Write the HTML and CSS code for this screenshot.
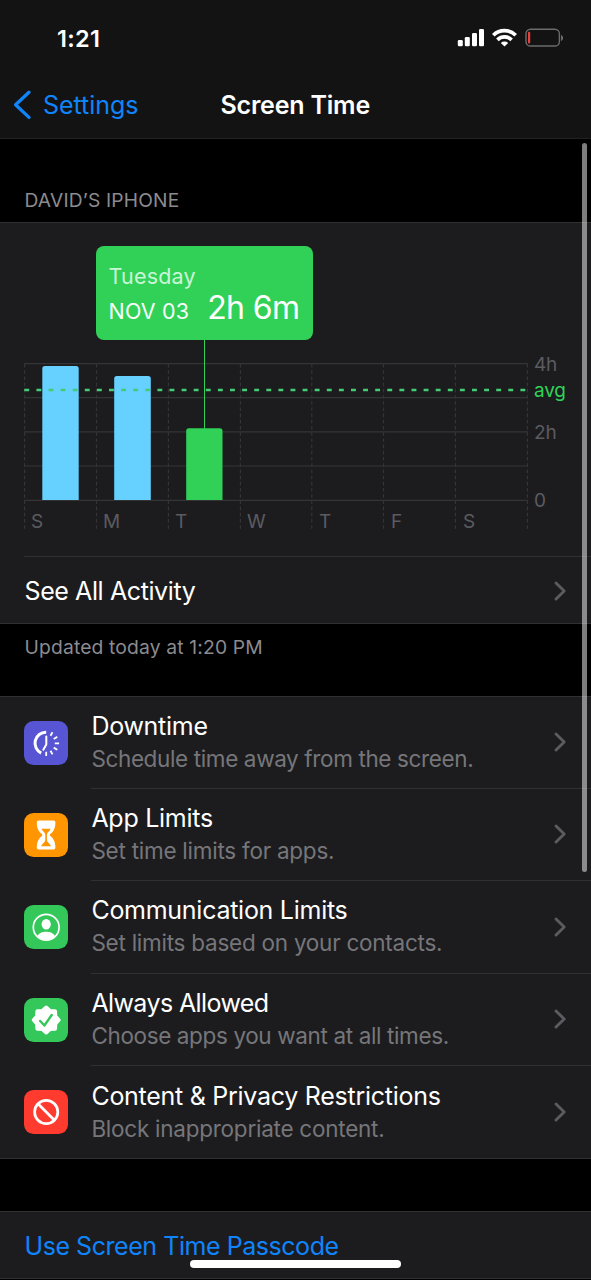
FILE: index.html
```html
<!DOCTYPE html>
<html lang="en">
<head>
<meta charset="utf-8">
<title>Screen Time</title>
<link rel="stylesheet" href="styles.css">
</head>
<body>
<div class="screen">
  <header class="top">
    <div class="status">
      <span class="clock">1:21</span>
      <svg class="status-icons" width="108" height="24" viewBox="0 0 108 24">
        <g fill="#fff">
          <rect x="0.8" y="14" width="5" height="6.3" rx="1.3"/>
          <rect x="7.8" y="11" width="5" height="9.3" rx="1.3"/>
          <rect x="15" y="7" width="5" height="13.3" rx="1.3"/>
          <rect x="22" y="3" width="5" height="17.3" rx="1.3"/>
        </g>
        <g fill="none" stroke="#fff" stroke-width="3.7">
          <path d="M36.3 9.2a16 16 0 0 1 22.4 0"/>
          <path d="M40.4 13.8a10.2 10.2 0 0 1 14.2 0"/>
        </g>
        <path fill="#fff" d="M43.8 17a5.4 5.4 0 0 1 7.4 0L47.5 20.6z"/>
        <rect x="69" y="3.2" width="33.4" height="16.8" rx="4.6" fill="none" stroke="#6c6c6c" stroke-width="1.4"/>
        <rect x="71" y="5.7" width="2.2" height="11.8" rx="1" fill="#e6413c"/>
        <path fill="#7c7c7c" d="M104.2 9v6c2.3-1 2.3-5 0-6z"/>
      </svg>
    </div>
    <nav class="nav">
      <svg width="20" height="32" viewBox="0 0 20 32" fill="none" stroke="#0f84fb" stroke-width="3.3" stroke-linecap="round" stroke-linejoin="round"><path d="M17 3.2 3.6 15.8l13.4 12.6"/></svg>
      <span class="back">Settings</span>
      <h1 class="title">Screen Time</h1>
    </nav>
  </header>

  <main>
    <div class="group-head"><span>DAVID’S IPHONE</span></div>
    <section class="card activity">
      <div class="chart">
        <div class="plot">
          <svg width="504" height="170" viewBox="24 362 504 170">
            <g stroke="#343436" stroke-width="1.2">
              <path d="M24 363.6H528M24 397.6H528M24 431.8H528M24 466H528M24 500.4H528"/>
              <path stroke-dasharray="3.6 2.6" d="M24.6 364V531M96.5 364V531M168.4 364V531M240.4 364V531M311.8 364V531M383.5 364V531M455.4 364V531M527.4 364V531"/>
            </g>
            <g fill="#66d1ff">
              <path d="M42.3 500V368.6a2.6 2.6 0 0 1 2.6-2.6H76.1a2.6 2.6 0 0 1 2.6 2.6V500z"/>
              <path d="M114.2 500V378.7a2.6 2.6 0 0 1 2.6-2.6H148.2a2.6 2.6 0 0 1 2.6 2.6V500z"/>
            </g>
            <path fill="#31d158" d="M186.2 500V430.9a2.6 2.6 0 0 1 2.6-2.6H219.9a2.6 2.6 0 0 1 2.6 2.6V500z"/>
            <path stroke="#43cc75" stroke-width="2.3" stroke-dasharray="4.9 7.2" d="M24.3 390H527"/>
          </svg>
          <div class="days"><span>S</span><span>M</span><span>T</span><span>W</span><span>T</span><span>F</span><span>S</span></div>
        </div>
        <div class="scale"><span>4h</span><span class="avg">avg</span><span class="two">2h</span><span class="zero">0</span></div>
        <div class="tip">
          <div class="tip-date"><span class="weekday">Tuesday</span><span class="date">NOV 03</span></div>
          <span class="amount">2h 6m</span>
        </div>
        <div class="stem"></div>
      </div>
      <div class="link-row">
        <span class="label see-all">See All Activity</span>
        <svg class="chev" viewBox="0 0 14 22"><path d="M3 3l8.2 8L3 19"/></svg>
      </div>
    </section>
    <p class="footnote"><span>Updated today at 1:20 PM</span></p>

    <section class="card list">
      <div class="item">
        <svg class="icon" viewBox="0 0 44 44"><rect width="44" height="44" rx="9.5" fill="#5755d4"/>
          <g fill="none" stroke="#fff">
            <path stroke-width="3" d="M22.2 11.2a11 11 0 0 0-5 20.9"/>
            <path stroke-width="2" stroke-linecap="round" stroke-linejoin="round" d="M22.3 15.5v8l-3 5.2"/>
            <path stroke-width="1.8" d="M26.5 14.8l2-3.6M29.7 18l3.6-2.1M30.8 22.3h4.3M29.7 26.6l3.6 2.1M26.5 29.8l2 3.6M22.2 30.8v4.3"/>
          </g></svg>
        <div class="body"><div class="text"><span class="label">Downtime</span><span class="sub">Schedule time away from the screen.</span></div><svg class="chev" viewBox="0 0 14 22"><path d="M3 3l8.2 8L3 19"/></svg></div>
      </div>
      <div class="item">
        <svg class="icon" viewBox="0 0 44 44"><rect width="44" height="44" rx="9.5" fill="#ff9500"/>
          <path fill="#fff" d="M14.8 7.5h14.6c1.2 0 2 .8 2 2 0 6.2-2.3 9.5-5.1 11.6q-1.2.9 0 1.8c2.8 2.1 5.1 5.4 5.1 11.6 0 1.2-.8 2-2 2H14.8c-1.2 0-2-.8-2-2 0-6.2 2.3-9.5 5.1-11.6q1.2-.9 0-1.8c-2.8-2.1-5.1-5.4-5.1-11.6 0-1.2.8-2 2-2z"/>
          <path fill="#ff9500" d="M17.5 15.7h9.2q-.9 2-2.7 3.5-1.1 1-1.1 2.8v4.6c0 3 2.3 3 4.2 6.6H17.1c1.9-3.6 4.2-3.6 4.2-6.6V22q0-1.8-1.1-2.8-1.8-1.5-2.7-3.5z"/></svg>
        <div class="body"><div class="text"><span class="label">App Limits</span><span class="sub sub-loose">Set time limits for apps.</span></div><svg class="chev" viewBox="0 0 14 22"><path d="M3 3l8.2 8L3 19"/></svg></div>
      </div>
      <div class="item">
        <svg class="icon" viewBox="0 0 44 44"><rect width="44" height="44" rx="9.5" fill="#34c759"/>
          <circle cx="22.2" cy="22.3" r="12.9" fill="none" stroke="#fff" stroke-width="1.7"/>
          <ellipse cx="22.2" cy="19.3" rx="4.6" ry="5.2" fill="#fff"/>
          <path fill="#fff" d="M13.3 31.2c1.5-3.3 5-4.5 8.9-4.5s7.4 1.2 8.9 4.5a12.8 12.8 0 0 1-17.8 0z"/></svg>
        <div class="body"><div class="text"><span class="label">Communication Limits</span><span class="sub sub-loose">Set limits based on your contacts.</span></div><svg class="chev" viewBox="0 0 14 22"><path d="M3 3l8.2 8L3 19"/></svg></div>
      </div>
      <div class="item">
        <svg class="icon" viewBox="0 0 44 44"><rect width="44" height="44" rx="9.5" fill="#34c759"/>
          <path fill="#fff" stroke="#fff" stroke-width="4" stroke-linejoin="round" d="M22.2 9.6L26 12.9L31 13.2L31.3 18.2L34.6 22L31.3 25.8L31 30.8L26 31.1L22.2 34.4L18.4 31.1L13.4 30.8L13.1 25.8L9.8 22L13.1 18.2L13.4 13.2L18.4 12.9z"/>
          <path fill="none" stroke="#34c759" stroke-width="2.4" stroke-linecap="round" stroke-linejoin="round" d="M16.2 23l4.2 4.5 7.3-10.5"/></svg>
        <div class="body"><div class="text"><span class="label tight">Always Allowed</span><span class="sub">Choose apps you want at all times.</span></div><svg class="chev" viewBox="0 0 14 22"><path d="M3 3l8.2 8L3 19"/></svg></div>
      </div>
      <div class="item">
        <svg class="icon" viewBox="0 0 44 44"><rect width="44" height="44" rx="9.5" fill="#ff3b30"/>
          <g fill="none" stroke="#fff" stroke-width="2.7"><circle cx="22.2" cy="22" r="11.6"/><path d="M14 13.8l16.4 16.4"/></g></svg>
        <div class="body"><div class="text"><span class="label">Content &amp; Privacy Restrictions</span><span class="sub sub-loose">Block inappropriate content.</span></div><svg class="chev" viewBox="0 0 14 22"><path d="M3 3l8.2 8L3 19"/></svg></div>
      </div>
    </section>

    <section class="card passcode"><span class="label blue">Use Screen Time Passcode</span></section>
  </main>
  <div class="scrollbar"></div>
  <div class="home"></div>
</div>
</body>
</html>
```
FILE: styles.css
```css
* { box-sizing: border-box; }
body {
  margin: 0;
  background: #000;
  color: #fff;
  font-family: Inter, "Liberation Sans", sans-serif;
}
.screen { position: relative; width: 591px; height: 1280px; overflow: hidden; background: #000; }
.top { height: 139px; background: #131313; border-bottom: 1px solid #222223; }
.status { height: 72px; display: flex; justify-content: space-between; align-items: center; padding: 4px 26px 0 57px; }
.clock { font-size: 23.5px; font-weight: 600; letter-spacing: 0.3px; }
.nav { height: 66px; display: grid; grid-template-columns: 20px 188.5px 1fr; align-items: center; padding: 0 0 1px 12px; }
.back { font-size: 25px; color: #0f84fb; letter-spacing: -0.05px; padding-left: 11px; }
.title { margin: 0; font-size: 25px; font-weight: 600; letter-spacing: -0.2px; white-space: nowrap; }

.group-head { height: 83px; display: flex; align-items: flex-end; padding: 0 24.5px 10px; font-size: 19.2px; line-height: 24px; letter-spacing: 0.18px; color: #8b8b90; }
.card { background: #1c1c1e; border-top: 1px solid #303032; border-bottom: 1px solid #303032; }
.activity { height: 402px; }
.chart { position: relative; height: 333px; padding: 139px 0 0 24px; display: flex; }
.plot { position: relative; width: 504px; height: 170px; }
.plot svg { display: block; }
.days { position: absolute; left: 0; bottom: -1px; width: 504px; display: grid; grid-template-columns: repeat(7, 72px); font-size: 19px; line-height: 22px; color: #5b5b60; }
.days span { padding-left: 7px; }
.scale { display: flex; flex-direction: column; padding-left: 6px; margin-top: -9px; font-size: 19px; line-height: 24px; color: #5b5b60; letter-spacing: -0.2px; }
.avg { color: #31d158; margin-top: 2px; }
.two { margin-top: 18px; }
.zero { margin-top: 44px; }
.tip { position: absolute; left: 96px; top: 23px; width: 216.5px; height: 94px; border-radius: 8px; background: #31d158; display: flex; align-items: flex-end; justify-content: space-between; padding: 0 13px 15px 12.5px; }
.tip-date { display: flex; flex-direction: column; font-size: 21.5px; line-height: 27px; letter-spacing: 0.2px; }
.weekday { color: #caf6d5; line-height: 43px; }
.date { color: #f6fff8; }
.amount { font-size: 32px; line-height: 34px; letter-spacing: -0.6px; }
.stem { position: absolute; left: 204px; top: 117px; width: 1px; height: 89px; background: #31d158; }
.link-row { height: 67px; margin-left: 24px; border-top: 1px solid #303032; display: flex; align-items: center; justify-content: space-between; padding: 1px 24px 0 0; }
.label { font-size: 25px; line-height: 32px; letter-spacing: -0.27px; white-space: nowrap; }
.see-all { letter-spacing: -0.4px; padding-left: 0.5px; }
.tight { letter-spacing: -0.6px; }
.chev { width: 14px; height: 22px; flex: none; fill: none; stroke: #5b5b60; stroke-width: 2.9; stroke-linecap: round; stroke-linejoin: round; }
.footnote { margin: 0; height: 72px; padding: 11px 24.5px 0; font-size: 19.3px; line-height: 24px; letter-spacing: 0.15px; color: #8b8b90; }

.list { height: 463px; display: flex; flex-direction: column; }
.item { flex: 0 0 92.5px; display: flex; align-items: center; padding-left: 24.4px; }
.item:first-child { flex-basis: 91.6px; }
.icon { width: 44px; height: 44px; flex: none; }
.body { flex: 1; height: 100%; margin-left: 23px; border-bottom: 1px solid #303032; display: flex; align-items: center; justify-content: space-between; padding-right: 24px; }
.item:last-child { flex-basis: 91.9px; }
.item:last-child .body { border-bottom: 0; }
.text { display: flex; flex-direction: column; }
.sub { font-size: 22.5px; line-height: 33px; letter-spacing: -0.37px; color: #76767a; white-space: nowrap; }
.sub-loose { letter-spacing: -0.25px; }

.passcode { margin-top: 52px; height: 68px; padding: 19px 24.5px 17px; display: flex; align-items: center; }
.blue { color: #0f84fb; letter-spacing: -0.45px; }
.scrollbar { position: absolute; left: 582px; top: 143px; width: 5px; height: 729px; border-radius: 3px; background: rgba(255, 255, 255, 0.49); }
.home { position: absolute; left: 190px; top: 1260px; width: 211px; height: 8px; border-radius: 4px; background: #fff; }
```
